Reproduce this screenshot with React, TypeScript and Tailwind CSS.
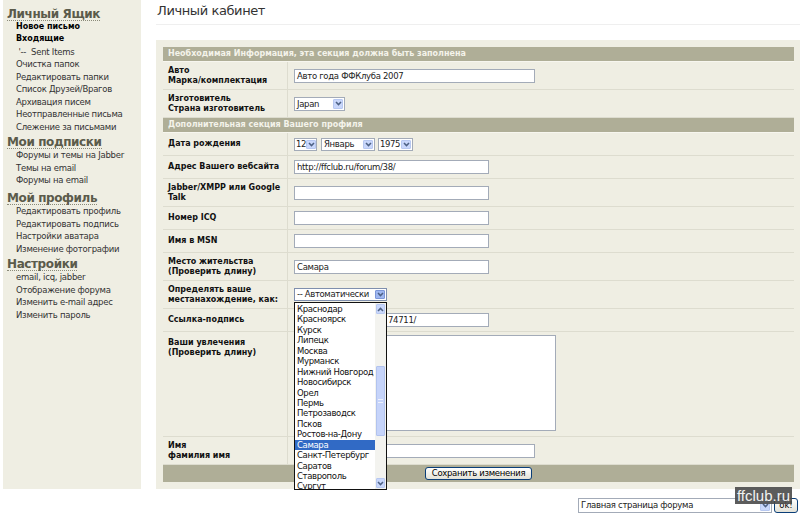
import React from "react";

const Chevron = ({ up = false, color = "#4d6185" }: { up?: boolean; color?: string }) => (
  <svg width="7" height="5" viewBox="0 0 7 5" className="block">
    <path d={up ? "M1 4 L3.5 1.4 L6 4" : "M1 1 L3.5 3.6 L6 1"} fill="none" stroke={color} strokeWidth="1.5" />
  </svg>
);

const Arrow = ({ active = false }: { active?: boolean }) => (
  <div
    className={
      active
        ? "my-px mr-px w-[10px] shrink-0 flex items-center justify-center bg-[#9fb7f0] border border-[#7d97d8] rounded-[1px]"
        : "my-px mr-px w-[10px] shrink-0 flex items-center justify-center bg-[#c9d7fb] border border-[#b7c8f1] rounded-[1px]"
    }
  >
    <Chevron />
  </div>
);

const Input = ({ text, cls }: { text?: React.ReactNode; cls: string }) => (
  <div
    className={`h-[14px] border border-[#a3abb8] bg-white pl-[2px] text-[8.5px] tracking-[-0.3px] leading-[12px] text-[#222] whitespace-nowrap overflow-hidden ${cls}`}
  >
    {text}
  </div>
);

const Bar = ({ children }: { children: React.ReactNode }) => (
  <div className="h-[15px] border-b border-[#f7f6ef]">
    <div className="h-[14px] bg-[#afae97] pl-[5px] text-[8px] font-bold leading-[14px] text-[#f4f3ea]">{children}</div>
  </div>
);

const Row = ({
  h,
  label,
  children,
  top = false,
}: {
  h: string;
  label: React.ReactNode;
  children?: React.ReactNode;
  top?: boolean;
}) => (
  <div className={`flex border-b border-[#dddccf] ${h}`}>
    <div
      className={`w-[125px] shrink-0 border-r border-[#dddccf] pl-[5px] text-[8px] font-bold leading-[9.5px] text-[#111] flex ${
        top ? "items-start pt-[6px]" : "items-center"
      }`}
    >
      <div>{label}</div>
    </div>
    <div className={`flex-1 pl-[6px] flex ${top ? "items-start pt-[3px]" : "items-center"}`}>{children}</div>
  </div>
);

const sidebar: { title: string; h: string; items: { t: string; b?: boolean }[] }[] = [
  {
    title: "Личный Ящик",
    h: "h-[20.5px]",
    items: [
      { t: "Новое письмо", b: true },
      { t: "Входящие", b: true },
      { t: " '--  Sent Items" },
      { t: "Очистка папок" },
      { t: "Редактировать папки" },
      { t: "Список Друзей/Врагов" },
      { t: "Архивация писем" },
      { t: "Неотправленные письма" },
      { t: "Слежение за письмами" },
    ],
  },
  {
    title: "Мои подписки",
    h: "h-[16px]",
    items: [{ t: "Форумы и темы на Jabber" }, { t: "Темы на email" }, { t: "Форумы на email" }],
  },
  {
    title: "Мой профиль",
    h: "h-[18.5px]",
    items: [
      { t: "Редактировать профиль" },
      { t: "Редактировать подпись" },
      { t: "Настройки аватара" },
      { t: "Изменение фотографии" },
    ],
  },
  {
    title: "Настройки",
    h: "h-[16px]",
    items: [
      { t: "email, icq, jabber" },
      { t: "Отображение форума" },
      { t: "Изменить e-mail адрес" },
      { t: "Изменить пароль" },
    ],
  },
];

const cities = [
  "Краснодар",
  "Красноярск",
  "Курск",
  "Липецк",
  "Москва",
  "Мурманск",
  "Нижний Новгород",
  "Новосибирск",
  "Орел",
  "Пермь",
  "Петрозаводск",
  "Псков",
  "Ростов-на-Дону",
  "Самара",
  "Санкт-Петербург",
  "Саратов",
  "Ставрополь",
  "Сургут",
  "Тольятти",
  "Тюмень",
];

export default function App() {
  return (
    <div className="relative w-[800px] h-[513px] overflow-hidden bg-white font-['DejaVu_Sans',Verdana,sans-serif] text-[#222]">
      <div className="flex h-[489px]">
        {/* Sidebar */}
        <div className="ml-[3px] w-[138px] shrink-0 bg-[#efeee3] pl-[4px]">
          {sidebar.map((g) => (
            <div key={g.title}>
              <div className={`${g.h} flex flex-col justify-end`}>
                <span className="self-start border-b border-dotted border-[#8b8b7a] text-[12px] tracking-[-0.4px] font-bold leading-[12px] text-[#5b5b4b]">
                  {g.title}
                </span>
              </div>
              {g.items.map((it) => (
                <div
                  key={it.t}
                  className={`pl-[9px] h-[12.5px] leading-[12.5px] whitespace-pre ${
                    it.b ? "font-bold text-black text-[8px]" : "text-[#333] text-[8.5px] tracking-[-0.25px]"
                  }`}
                >
                  {it.t}
                </div>
              ))}
            </div>
          ))}
        </div>

        {/* Main */}
        <div className="ml-[15px] flex-1 flex flex-col">
          <div className="h-[25px] border-b border-[#efefef] pl-[1px] pt-[3px] text-[13px] tracking-[-0.4px] leading-[15px] text-[#333]">
            Личный кабинет
          </div>
          <div className="h-[15px]" />
          <div className="h-[449px] bg-[#efeee3] pt-[7px] pl-[7px] pr-[6px]">
            <Bar>Необходимая Информация, эта секция должна быть заполнена</Bar>
            <Row
              h="h-[28px]"
              label={
                <>
                  Авто
                  <br />
                  Марка/комплектация
                </>
              }
            >
              <Input text="Авто года ФФКлуба 2007" cls="w-[241px]" />
            </Row>
            <Row
              h="h-[28px]"
              label={
                <>
                  Изготовитель
                  <br />
                  Страна изготовитель
                </>
              }
            >
              <div className="flex h-[14px] w-[51px] border border-[#a3abb8] bg-white">
                <div className="flex-1 pl-[2px] text-[8.5px] tracking-[-0.3px] leading-[12px]">Japan</div>
                <Arrow />
              </div>
            </Row>
            <Bar>Дополнительная секция Вашего профиля</Bar>
            <Row h="h-[23px]" label="Дата рождения">
              <div className="flex gap-[4px]">
                <div className="flex h-[13px] w-[23px] border border-[#a3abb8] bg-white">
                  <div className="flex-1 pl-[1px] text-[8.5px] tracking-[-0.4px] leading-[11px]">12</div>
                  <Arrow />
                </div>
                <div className="flex h-[13px] w-[54px] border border-[#a3abb8] bg-white">
                  <div className="flex-1 pl-[2px] text-[8.5px] tracking-[-0.3px] leading-[11px]">Январь</div>
                  <Arrow />
                </div>
                <div className="flex h-[13px] w-[35px] border border-[#a3abb8] bg-white -ml-[1px]">
                  <div className="flex-1 pl-[1px] text-[8.5px] tracking-[-0.4px] leading-[11px]">1975</div>
                  <Arrow />
                </div>
              </div>
            </Row>
            <Row h="h-[23px]" label="Адрес Вашего вебсайта">
              <Input text="http://ffclub.ru/forum/38/" cls="w-[195px]" />
            </Row>
            <Row
              h="h-[28px]"
              label={
                <>
                  Jabber/XMPP или Google
                  <br />
                  Talk
                </>
              }
            >
              <Input cls="w-[195px]" />
            </Row>
            <Row h="h-[23px]" label="Номер ICQ">
              <Input cls="w-[195px]" />
            </Row>
            <Row h="h-[23px]" label="Имя в MSN">
              <Input cls="w-[195px]" />
            </Row>
            <Row
              h="h-[28px]"
              label={
                <>
                  Место жительства
                  <br />
                  (Проверить длину)
                </>
              }
            >
              <Input text="Самара" cls="w-[195px]" />
            </Row>
            <Row
              h="h-[28px]"
              label={
                <>
                  Определять ваше
                  <br />
                  местанахождение, как:
                </>
              }
            >
              <div className="flex h-[13px] w-[93px] border border-[#7f8fae] bg-white">
                <div className="flex-1 pl-[2px] text-[8.5px] tracking-[-0.35px] leading-[11px] whitespace-nowrap overflow-hidden">
                  -- Автоматически
                </div>
                <Arrow active />
              </div>
            </Row>
            <Row h="h-[23px]" label="Ссылка-подпись">
              <Input
                text={
                  <>
                    <span className="inline-block w-[91px] overflow-hidden align-top">http://ffclub.ru/forum/</span>
                    74711/
                  </>
                }
                cls="w-[195px]"
              />
            </Row>
            <Row
              h="h-[105px]"
              top
              label={
                <>
                  Ваши увлечения
                  <br />
                  (Проверить длину)
                </>
              }
            >
              <div className="h-[96px] w-[262px] border border-[#a3abb8] bg-white" />
            </Row>
            <Row
              h="h-[28px]"
              label={
                <>
                  Имя
                  <br />
                  фамилия имя
                </>
              }
            >
              <Input cls="w-[241px]" />
            </Row>
            <div className="h-[17px] bg-[#afae97] flex items-center justify-center">
              <div className="h-[13px] px-[6px] rounded-[3px] border border-[#0a3e78] bg-gradient-to-b from-white to-[#e3e2d8] text-[8.5px] tracking-[-0.3px] leading-[11px] text-black">
                Сохранить изменения
              </div>
            </div>
          </div>
        </div>
      </div>

      {/* Bottom jump box */}
      <div className="flex justify-end pt-[9px] pr-[2px] gap-[2px]">
        <div className="flex h-[15px] w-[194px] border border-[#a3abb8] bg-white">
          <div className="flex-1 pl-[2px] text-[8.5px] tracking-[-0.3px] leading-[13px]">Главная страница форума</div>
          <Arrow />
        </div>
        <div className="h-[15px] w-[24px] rounded-[3px] border border-[#0a3e78] bg-gradient-to-b from-white to-[#e3e2d8] text-center text-[8.5px] leading-[13px] text-black">
          ok!
        </div>
      </div>

      {/* Watermark */}
      <div className="absolute left-[735px] top-[487px] h-[17px] w-[57px] bg-[#4a4a4a]/90 text-center font-['Liberation_Sans',Arial,sans-serif] text-[15px] leading-[17px] text-[#f2f2f2]">
        ffclub.ru
      </div>

      {/* Open dropdown list */}
      <div className="absolute left-[294px] top-[302px] h-[188px] w-[93px] border border-[#111] bg-white flex">
        <div className="flex-1 overflow-hidden pt-[1px]">
          {cities.map((c) => (
            <div
              key={c}
              className={`h-[10.45px] pl-[2px] text-[8.5px] tracking-[-0.35px] leading-[10.45px] whitespace-nowrap ${
                c === "Самара" ? "bg-[#316ac5] text-white" : "text-[#111]"
              }`}
            >
              {c}
            </div>
          ))}
        </div>
        <div className="w-[11px] bg-[#f3f3ef] flex flex-col">
          <div className="h-[10px] m-px flex items-center justify-center bg-[#c9d7fb] border border-[#b7c8f1] rounded-[1px]">
            <Chevron up />
          </div>
          <div className="h-[51px]" />
          <div className="h-[70px] mx-px flex items-center justify-center bg-[#c6d4fa] border border-[#b2c3ee] rounded-[1px]">
            <div className="w-[5px] h-[4px] border-y border-[#eef2fd]" />
          </div>
          <div className="flex-1" />
          <div className="h-[10px] m-px flex items-center justify-center bg-[#c9d7fb] border border-[#b7c8f1] rounded-[1px]">
            <Chevron />
          </div>
        </div>
      </div>
    </div>
  );
}
